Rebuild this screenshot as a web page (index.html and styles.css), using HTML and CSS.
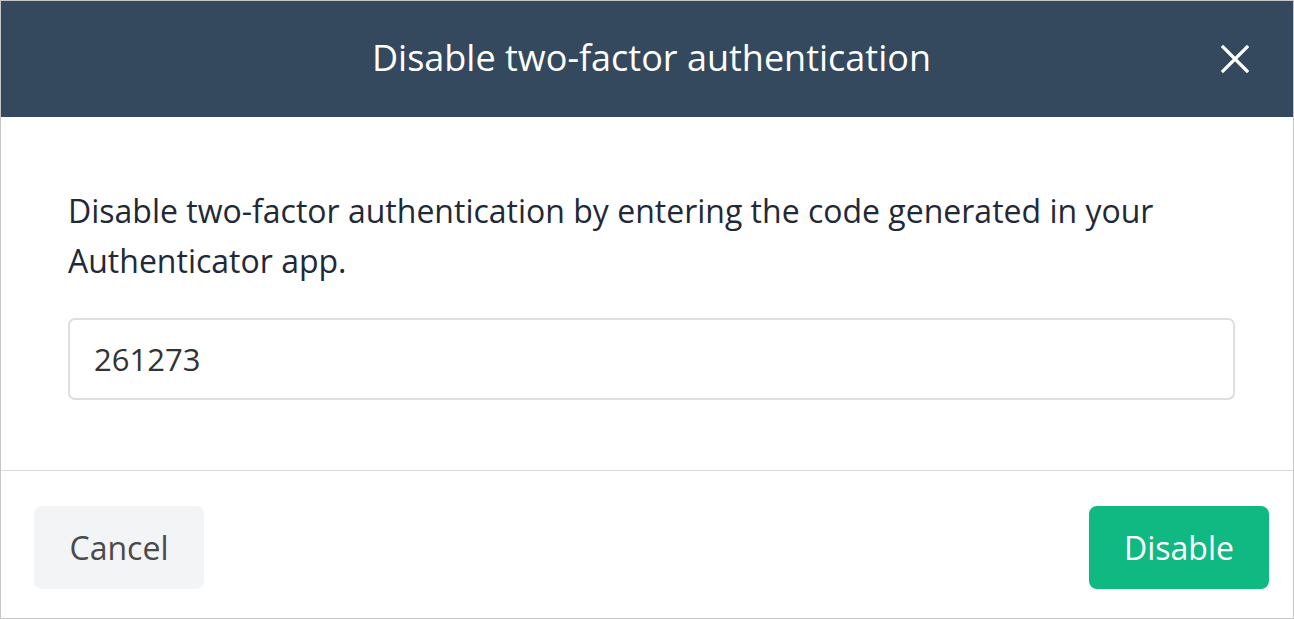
FILE: index.html
```html
<!DOCTYPE html>
<html lang="en">
<head>
<meta charset="utf-8">
<title>Disable two-factor authentication</title>
<link rel="stylesheet" href="styles.css">
</head>
<body>
<div class="modal">
  <header class="modal-header">
    <span></span>
    <h1 class="modal-title">Disable two-factor authentication</h1>
    <button class="close-btn" aria-label="Close">
      <svg width="28" height="28" viewBox="0 0 28 28"><path d="M2 2 L26 26 M26 2 L2 26" stroke="#fff" stroke-width="3.2" stroke-linecap="square"/></svg>
    </button>
  </header>
  <section class="modal-body">
    <p class="intro">Disable two-factor authentication by entering the code generated in your Authenticator app.</p>
    <input class="code-input" type="text" value="261273">
  </section>
  <footer class="modal-footer">
    <button class="btn btn-cancel">Cancel</button>
    <button class="btn btn-disable">Disable</button>
  </footer>
</div>
</body>
</html>
```
FILE: styles.css
```css
html, body {
  margin: 0;
  padding: 0;
  background: #fff;
}
.modal {
  width: 1294px;
  height: 619px;
  box-sizing: border-box;
  border: 1px solid #c6c6c6;
  display: flex;
  flex-direction: column;
  font-family: "Open Sans", "Noto Sans", sans-serif;
  background: #fff;
}
.modal-header {
  height: 116px;
  box-sizing: border-box;
  flex: none;
  background: #34495e;
  display: grid;
  grid-template-columns: 1fr auto 1fr;
  align-items: center;
  padding: 0 44px 4px 53px;
}
.modal-title {
  margin: 0;
  color: #fff;
  font-weight: 400;
  font-size: 36px;
  white-space: nowrap;
}
.close-btn {
  justify-self: end;
  background: none;
  border: 0;
  padding: 0;
  width: 28px;
  height: 28px;
  display: flex;
  margin-top: 4px;
}
.modal-body {
  flex: 1;
  padding: 69px 58px 0 67px;
}
.intro {
  margin: 0;
  font-size: 32px;
  line-height: 50px;
  color: #1f2937;
}
.code-input {
  display: block;
  margin-top: 32px;
  width: 100%;
  height: 82px;
  box-sizing: border-box;
  border: 2px solid #dedede;
  border-radius: 7px;
  padding: 0 24px;
  font-family: inherit;
  font-size: 31px;
  color: #333;
  outline: none;
}
.modal-footer {
  flex: none;
  border-top: 1px solid #dadada;
  padding: 35px 24px 29px 33px;
  display: flex;
  justify-content: space-between;
}
.btn {
  height: 83px;
  border: 0;
  border-radius: 8px;
  font-family: inherit;
  font-size: 32px;
}
.btn-cancel {
  width: 170px;
  background: #f3f4f6;
  color: #4a4a4a;
}
.btn-disable {
  width: 180px;
  background: #10b981;
  color: #fff;
}
```
